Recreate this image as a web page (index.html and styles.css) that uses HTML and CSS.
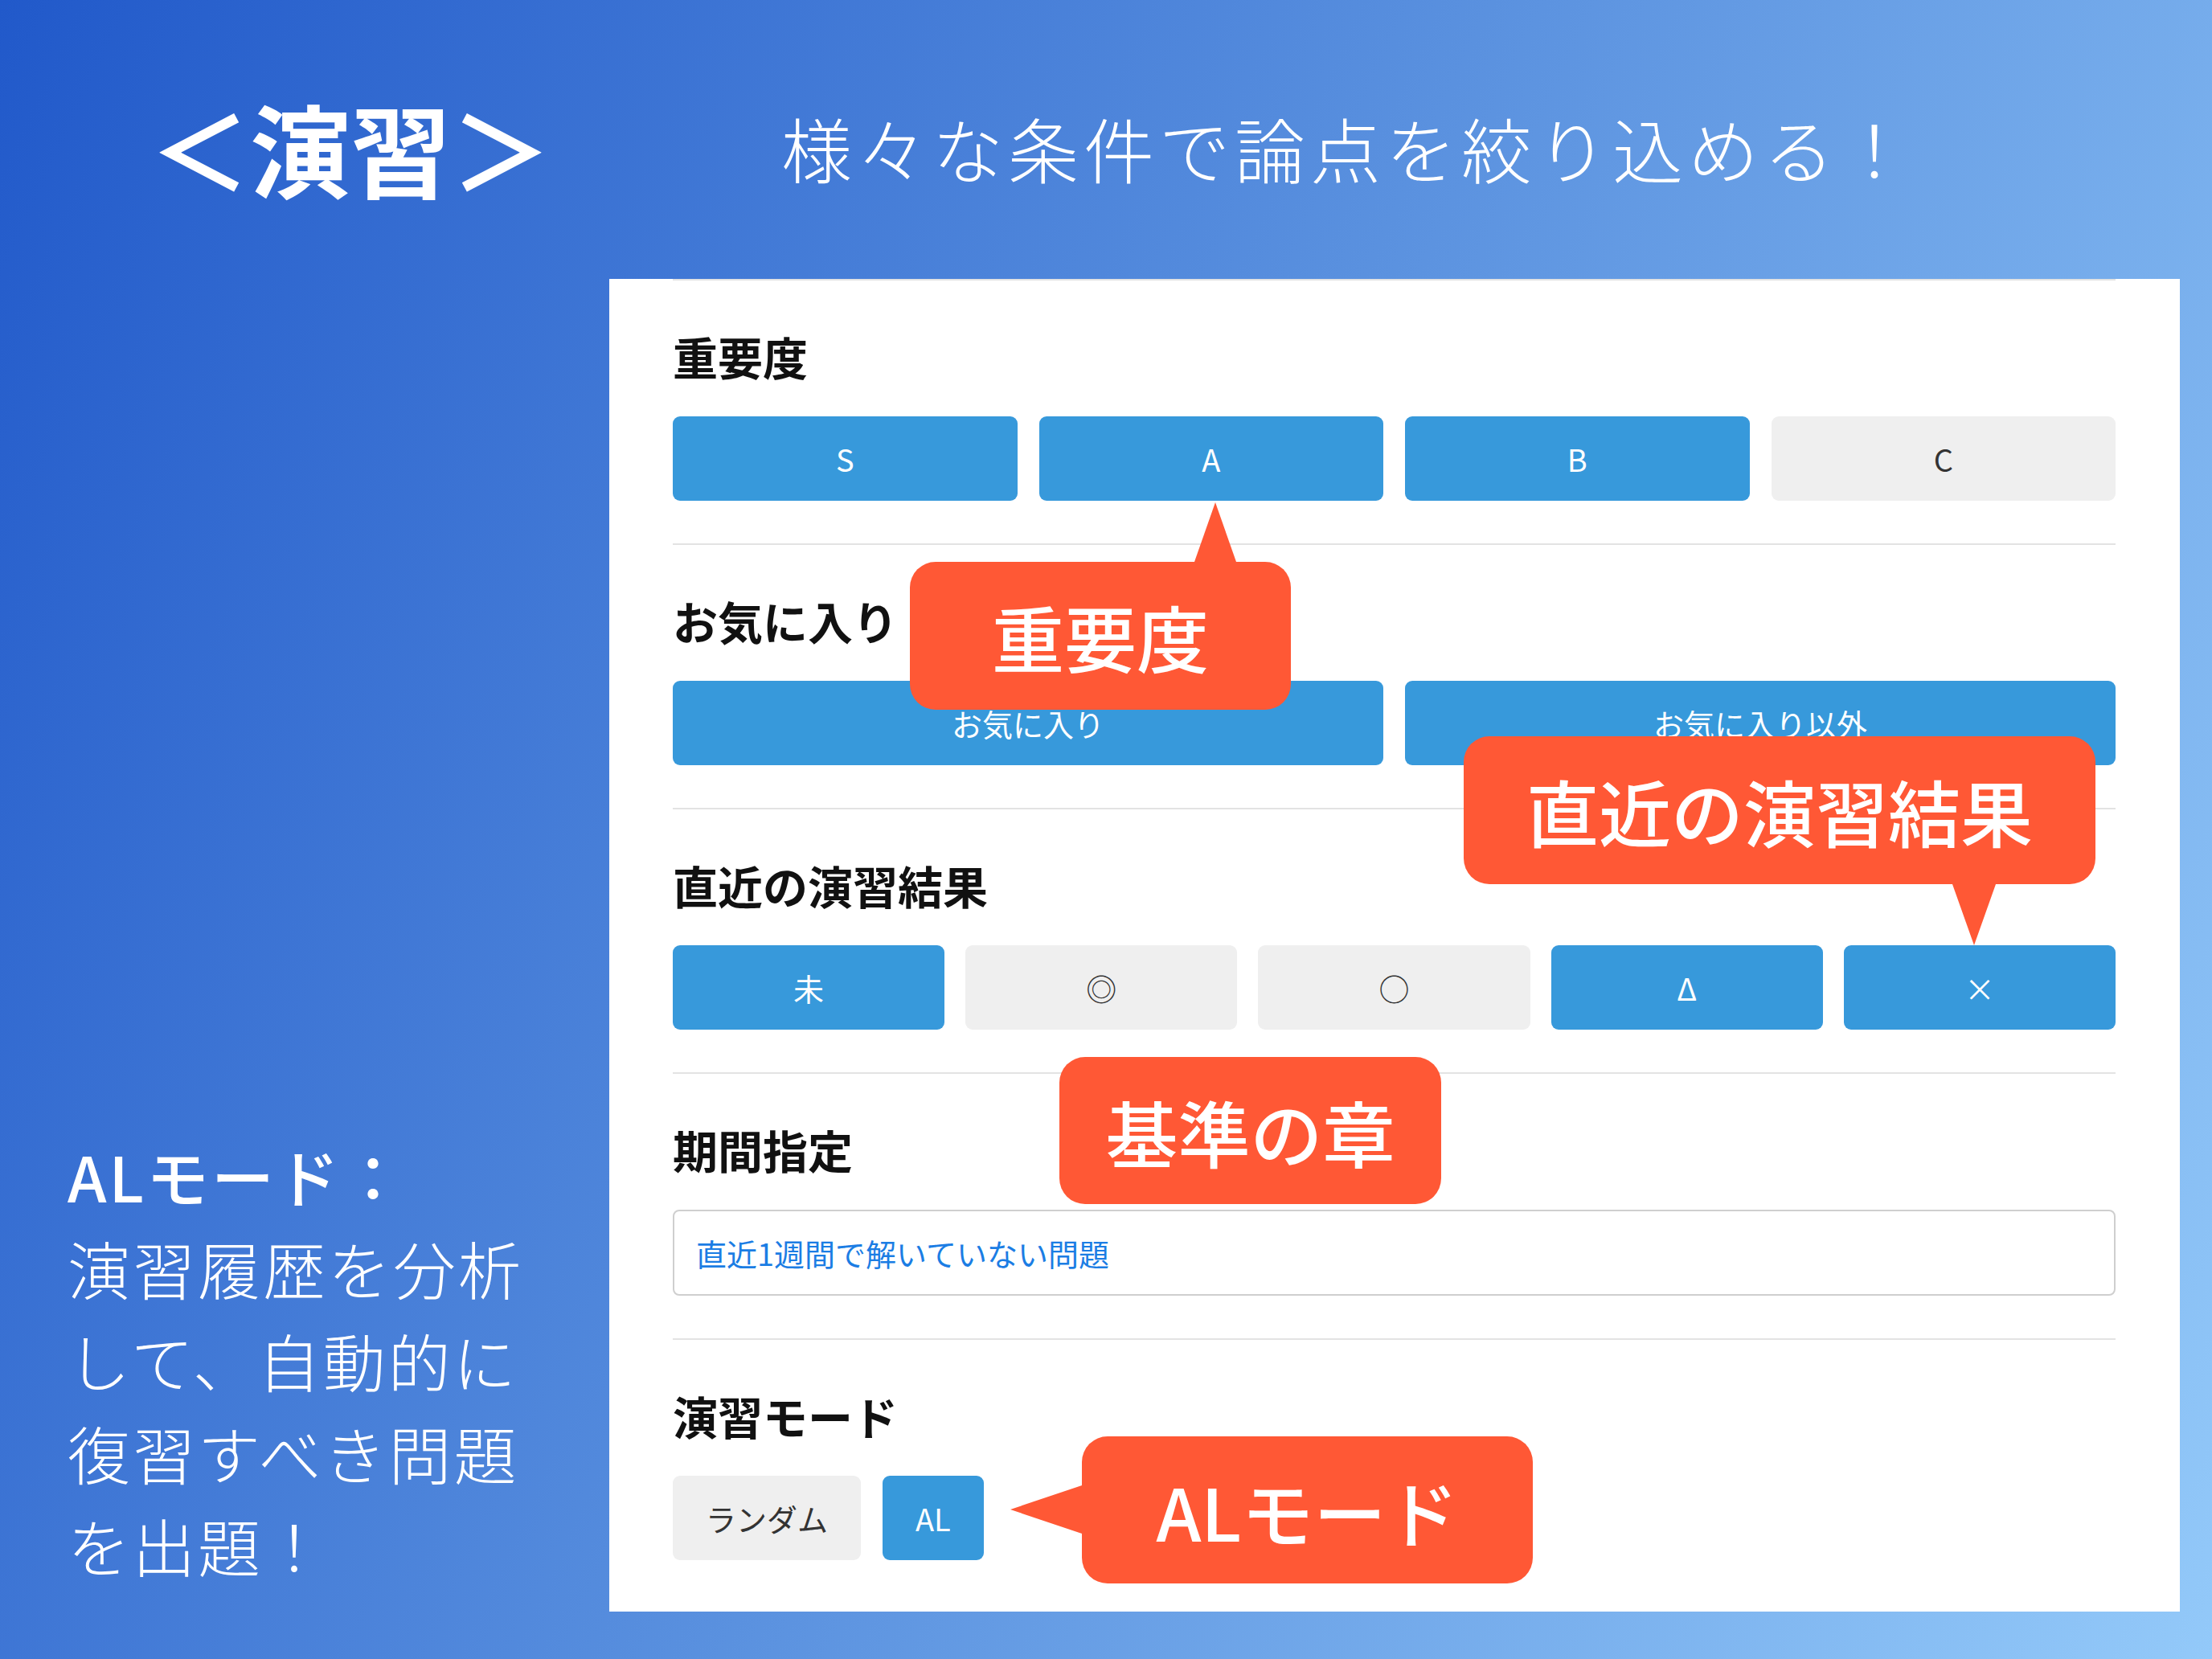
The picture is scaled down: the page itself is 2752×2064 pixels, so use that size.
FILE: index.html
```html
<!DOCTYPE html>
<html lang="ja">
<head>
  <meta charset="UTF-8">
  <title>演習 - 論点の絞り込み</title>
  <link rel="stylesheet" href="styles.css">
</head>
<body>

  <header class="top">
    <h1 class="title">＜演習＞</h1>
    <p class="lead">様々な条件で論点を絞り込める！</p>
  </header>

  <main class="main">
    <aside class="note">
      <p class="note-head">ALモード：</p>
      <p class="note-body">演習履歴を分析<br>して、自動的に<br>復習すべき問題<br>を出題！</p>
    </aside>

    <section class="panel">
      <div class="group">
        <h2>重要度</h2>
        <div class="choices four">
          <button class="chip on">S</button>
          <button class="chip on">A</button>
          <button class="chip on">B</button>
          <button class="chip">C</button>
        </div>
      </div>

      <div class="group">
        <h2>お気に入り</h2>
        <div class="choices two">
          <button class="chip on">お気に入り</button>
          <button class="chip on">お気に入り以外</button>
        </div>
      </div>

      <div class="group">
        <h2>直近の演習結果</h2>
        <div class="choices five">
          <button class="chip on">未</button>
          <button class="chip">◎</button>
          <button class="chip">○</button>
          <button class="chip on">Δ</button>
          <button class="chip on">×</button>
        </div>
      </div>

      <div class="group">
        <h2>期間指定</h2>
        <div class="field">直近1週間で解いていない問題</div>
      </div>

      <div class="group last">
        <h2>演習モード</h2>
        <div class="mode">
          <button class="chip">ランダム</button>
          <button class="chip on">AL</button>
        </div>
      </div>

      <!-- 吹き出し -->
      <div class="callout c-importance tip-up">重要度</div>
      <div class="callout c-result tip-down">直近の演習結果</div>
      <div class="callout c-chapter">基準の章</div>
      <div class="callout c-mode tip-left">ALモード</div>
    </section>
  </main>

</body>
</html>
```

FILE: styles.css
```css
* {
  margin: 0;
  padding: 0;
  box-sizing: border-box;
}

html, body {
  width: 2752px;
  height: 2064px;
  overflow: hidden;
}

body {
  font-family: "Noto Sans CJK JP", "Noto Sans", sans-serif;
  background: linear-gradient(115deg, #2159ca 0%, #5a91df 50%, #93c9f9 100%);
  color: #fff;
}

.top {
  height: 347px;
  display: flex;
  align-items: center;
  padding: 18px 0 0 186px;
}

.title {
  font-size: 125px;
  font-weight: 700;
  line-height: 1;
  margin-right: 286px;
}

.lead {
  font-size: 88px;
  font-weight: 300;
  letter-spacing: 6px;
  line-height: 1;
}

.main {
  display: flex;
  height: 1658px;
}

.note {
  width: 758px;
  flex-shrink: 0;
  display: flex;
  flex-direction: column;
  justify-content: flex-end;
  padding: 0 0 25px 84px;
  font-size: 78px;
  line-height: 115px;
  letter-spacing: 3px;
}

.note-head {
  font-weight: 500;
}

.note-body {
  font-weight: 300;
}

.panel {
  position: relative;
  width: 1954px;
  height: 1658px;
  background: #fff;
  padding: 0 80px 0 79px;
  color: #111;
}

.group {
  border-top: 2px solid #e3e3e3;
  padding: 61px 0 53px;
}

.group.last {
  padding-bottom: 0;
}

.group h2 {
  font-size: 56px;
  font-weight: 700;
  line-height: 66px;
  margin-bottom: 42px;
}

.choices {
  display: grid;
  gap: 27px;
}

.choices.four {
  grid-template-columns: repeat(4, 1fr);
}

.choices.two {
  grid-template-columns: repeat(2, 1fr);
}

.choices.five {
  grid-template-columns: repeat(5, 1fr);
  gap: 26px;
}

.chip {
  height: 105px;
  border: none;
  border-radius: 9px;
  background: #efefef;
  color: #333;
  font-family: "Noto Sans CJK JP", "Noto Sans", sans-serif;
  font-size: 38px;
  font-weight: 400;
}

.chip.on {
  background: #3799db;
  color: #fff;
}

.mode {
  display: flex;
  gap: 27px;
}

.mode .chip {
  padding: 0 41px;
}

.field {
  height: 107px;
  border: 2px solid #cfcfcf;
  border-radius: 8px;
  padding: 0 27px;
  display: flex;
  align-items: center;
  color: #1b7de4;
  font-size: 38px;
}

.callout {
  position: absolute;
  height: 184px;
  display: flex;
  align-items: center;
  justify-content: center;
  background: #ff5835;
  border-radius: 32px;
  color: #fff;
  font-size: 90px;
  font-weight: 500;
}

.callout::after {
  content: "";
  position: absolute;
  width: 0;
  height: 0;
}

.tip-up::after {
  bottom: 100%;
  left: 354px;
  border-left: 26px solid transparent;
  border-right: 26px solid transparent;
  border-bottom: 74px solid #ff5835;
}

.tip-down::after {
  top: 100%;
  left: 608px;
  border-left: 27px solid transparent;
  border-right: 27px solid transparent;
  border-top: 76px solid #ff5835;
}

.tip-left::after {
  right: 100%;
  top: 61px;
  border-top: 30px solid transparent;
  border-bottom: 30px solid transparent;
  border-right: 89px solid #ff5835;
}

.c-importance {
  left: 374px;
  top: 352px;
  width: 474px;
}

.c-result {
  left: 1063px;
  top: 569px;
  width: 786px;
}

.c-chapter {
  left: 560px;
  top: 968px;
  width: 475px;
  height: 183px;
}

.c-mode {
  left: 588px;
  top: 1440px;
  width: 561px;
  height: 183px;
}
```
